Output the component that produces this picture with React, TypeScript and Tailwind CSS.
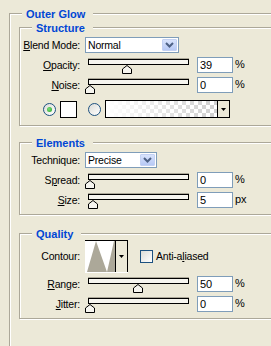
import type { ReactNode } from "react";

function Mn({ children }: { children: ReactNode }) {
  return <span className="underline decoration-1 underline-offset-[1px]">{children}</span>;
}

function Group({
  title,
  outer,
  className = "",
  children,
}: {
  title: string;
  outer?: boolean;
  className?: string;
  children: ReactNode;
}) {
  const frame = outer
    ? "border-l border-t shadow-[inset_1px_1px_0_#fff]"
    : "border shadow-[inset_1px_1px_0_#fff,1px_1px_0_#fff]";
  return (
    <div className={`relative border-[#aca899] ${frame} ${className}`}>
      <div className="absolute -top-[6px] left-[12px] h-[12px] bg-[#ece9d8] pl-[4px] pr-[8px] text-[11px] font-bold leading-[12px] tracking-normal text-[#0046d5]">
        {title}
      </div>
      {children}
    </div>
  );
}

function Slider({ pct }: { pct: number }) {
  return (
    <div className="relative h-[16px] w-[101px]">
      <div className="mt-[4px] h-[6px] border border-black bg-[#f6f5ef] shadow-[0_-1px_0_#aca899]" />
      <svg
        className="absolute top-[6px]"
        style={{ left: -3.5 + pct * 0.97 }}
        width="10"
        height="9"
        viewBox="0 0 10 9"
      >
        <polygon points="0.5,8.5 0.5,4 5,0.5 9.5,4 9.5,8.5" fill="#f6f5ef" stroke="#000" />
      </svg>
    </div>
  );
}

function NumBox({ value }: { value: string }) {
  return (
    <div className="flex h-[16px] w-[36px] items-center border border-[#7f9db9] bg-white pl-[2px] text-[11px] tracking-normal">
      {value}
    </div>
  );
}

function SliderRow({
  label,
  pct,
  value,
  unit,
  className = "",
}: {
  label: ReactNode;
  pct: number;
  value: string;
  unit: string;
  className?: string;
}) {
  return (
    <div className={`flex h-[16px] items-center ${className}`}>
      <div className="w-[60px] text-right">{label}</div>
      <div className="ml-[8px]">
        <Slider pct={pct} />
      </div>
      <div className="ml-[8px]">
        <NumBox value={value} />
      </div>
      <div className="ml-[2px] -mt-[2px] text-[11px] tracking-normal">{unit}</div>
    </div>
  );
}

function Select({ value, width }: { value: string; width: string }) {
  return (
    <div className={`flex h-[16px] items-center border border-[#7f9db9] bg-white p-[1px] ${width}`}>
      <span className="flex-1 pl-[1px]">{value}</span>
      <div className="flex h-full w-[15px] items-center justify-center rounded-[1px] border border-[#c3d1f3] bg-[linear-gradient(#d8e3fc,#b7c9f5)]">
        <svg width="9" height="6" viewBox="0 0 9 6">
          <path d="M1 1 L4.5 4.5 L8 1" stroke="#4d6185" strokeWidth="2" fill="none" />
        </svg>
      </div>
    </div>
  );
}

function Radio({ checked, className = "" }: { checked?: boolean; className?: string }) {
  return (
    <div
      className={`flex h-[13px] w-[13px] items-center justify-center rounded-full border border-[#1c5180] bg-[linear-gradient(135deg,#dcdcd7,#fff)] ${className}`}
    >
      {checked && <div className="h-[5px] w-[5px] rounded-full bg-[radial-gradient(circle_at_40%_40%,#7be07a,#21a121)]" />}
    </div>
  );
}

function DownTri() {
  return (
    <svg width="5" height="3" viewBox="0 0 5 3">
      <polygon points="0,0 5,0 2.5,3" fill="#000" />
    </svg>
  );
}

export default function App() {
  return (
    <div className="h-[346px] w-[271px] overflow-hidden bg-[#ece9d8] pl-[9px] pt-[13px] font-['Liberation_Sans',Arial,sans-serif] text-[10.5px] leading-none tracking-[-0.2px] text-black">
      <Group title="Outer Glow" outer className="h-[340px] w-[300px] pl-[9px] pt-[13px]">
        <Group title="Structure" className="h-[99px] pt-[9px]">
          <div className="flex h-[16px] items-center">
            <div className="w-[60px] text-right">
              <Mn>B</Mn>lend Mode:
            </div>
            <div className="ml-[5px]">
              <Select value="Normal" width="w-[94px]" />
            </div>
          </div>
          <SliderRow className="mt-[4px]" label={<><Mn>O</Mn>pacity:</>} pct={39} value="39" unit="%" />
          <SliderRow className="mt-[4px]" label={<><Mn>N</Mn>oise:</>} pct={0} value="0" unit="%" />
          <div className="mt-[7px] flex h-[18px] items-center">
            <Radio checked className="ml-[23px]" />
            <div className="ml-[4px] h-[17px] w-[17px] border border-black bg-white" />
            <Radio className="ml-[11px]" />
            <div className="ml-[4px] flex h-[18px] w-[125px] border border-black">
              <div className="flex-1 bg-[linear-gradient(to_right,#fff,rgba(255,255,255,0)),conic-gradient(#cfcfcf_25%,#fff_0_50%,#cfcfcf_0_75%,#fff_0)] [background-size:100%_100%,8px_8px]" />
              <div className="flex w-[12px] items-center justify-center border-l border-black bg-[#ece9d8]">
                <DownTri />
              </div>
            </div>
          </div>
        </Group>

        <Group title="Elements" className="mt-[16px] h-[73px] pt-[9px]">
          <div className="flex h-[16px] items-center">
            <div className="w-[60px] text-right">Technique:</div>
            <div className="ml-[5px]">
              <Select value="Precise" width="w-[72px]" />
            </div>
          </div>
          <SliderRow className="mt-[4px]" label={<>S<Mn>p</Mn>read:</>} pct={0} value="0" unit="%" />
          <SliderRow className="mt-[4px]" label={<><Mn>S</Mn>ize:</>} pct={4} value="5" unit="px" />
        </Group>

        <Group title="Quality" className="mt-[18px] h-[86px] pt-[6px]">
          <div className="flex h-[33px] items-center">
            <div className="w-[60px] text-right">Contour:</div>
            <div className="ml-[5px] flex h-[33px] w-[43px] border-t border-black bg-white pb-[1px]">
              <svg width="30" height="31" viewBox="0 0 30 31">
                <polygon points="2,31 11,0 22,31 29,0 30,0 30,31" fill="#aca899" />
              </svg>
              <div className="flex w-[13px] items-center justify-center border-l border-r border-black bg-[#ece9d8]">
                <DownTri />
              </div>
            </div>
            <div className="ml-[12px] h-[13px] w-[13px] border border-[#1c5180] bg-[linear-gradient(135deg,#dcdcd7,#fff)]" />
            <div className="ml-[3px]">
              Anti-a<Mn>l</Mn>iased
            </div>
          </div>
          <SliderRow className="mt-[3px]" label={<><Mn>R</Mn>ange:</>} pct={50} value="50" unit="%" />
          <SliderRow className="mt-[4px]" label={<><Mn>J</Mn>itter:</>} pct={0} value="0" unit="%" />
        </Group>
      </Group>
    </div>
  );
}
